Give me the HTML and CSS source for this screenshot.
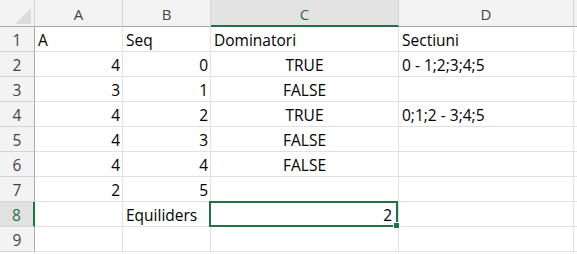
FILE: index.html
```html
<!DOCTYPE html>
<html lang="ro">
<head>
    <meta charset="UTF-8">
    <meta name="viewport" content="width=device-width, initial-scale=1.0">
    <title>Equiliders</title>
    <link rel="stylesheet" href="styles.css">
</head>
<body>
    <div class="sheet">
        <!-- column headers -->
        <div class="corner">
            <svg class="corner-tri" width="16" height="16" viewBox="0 0 16 16"><polygon points="16,0 16,16 0,16" fill="#dcdcdc"/></svg>
        </div>
        <div class="colhead">A</div>
        <div class="colhead">B</div>
        <div class="colhead active">C</div>
        <div class="colhead">D</div>
        <div class="colhead last"></div>

        <div class="rowhead">1</div>
        <div class="cell">A</div>
        <div class="cell">Seq</div>
        <div class="cell">Dominatori</div>
        <div class="cell">Sectiuni</div>
        <div class="cell"></div>

        <div class="rowhead">2</div>
        <div class="cell num">4</div>
        <div class="cell num">0</div>
        <div class="cell bool">TRUE</div>
        <div class="cell">0 - 1;2;3;4;5</div>
        <div class="cell"></div>

        <div class="rowhead">3</div>
        <div class="cell num">3</div>
        <div class="cell num">1</div>
        <div class="cell bool">FALSE</div>
        <div class="cell"></div>
        <div class="cell"></div>

        <div class="rowhead">4</div>
        <div class="cell num">4</div>
        <div class="cell num">2</div>
        <div class="cell bool">TRUE</div>
        <div class="cell">0;1;2 - 3;4;5</div>
        <div class="cell"></div>

        <div class="rowhead">5</div>
        <div class="cell num">4</div>
        <div class="cell num">3</div>
        <div class="cell bool">FALSE</div>
        <div class="cell"></div>
        <div class="cell"></div>

        <div class="rowhead">6</div>
        <div class="cell num">4</div>
        <div class="cell num">4</div>
        <div class="cell bool">FALSE</div>
        <div class="cell"></div>
        <div class="cell"></div>

        <div class="rowhead">7</div>
        <div class="cell num">2</div>
        <div class="cell num">5</div>
        <div class="cell"></div>
        <div class="cell"></div>
        <div class="cell"></div>

        <div class="rowhead active">8</div>
        <div class="cell"></div>
        <div class="cell">Equiliders</div>
        <div class="cell num selected">2
            <span class="sel-box"><span class="sel-handle"></span></span>
        </div>
        <div class="cell"></div>
        <div class="cell"></div>

        <div class="rowhead">9</div>
        <div class="cell"></div>
        <div class="cell"></div>
        <div class="cell"></div>
        <div class="cell"></div>
        <div class="cell"></div>
    </div>
</body>
</html>
```
FILE: styles.css
```css
body { margin: 0; background: #fff; overflow: hidden; font-family: "Open Sans", "Noto Sans", sans-serif; }

.sheet {
    display: grid;
    grid-template-columns: 35px 88px 88px 188px 175px 1fr;
    grid-template-rows: 27px repeat(9, 25px);
    width: 577px;
    height: 254px;
    font-size: 15.5px;
    color: #000;
}

.corner, .colhead, .rowhead, .cell { box-sizing: border-box; }

/* header strip */
.corner {
    position: relative;
    background: #f3f3f3;
    border-right: 1px solid #d4d4d4;
    border-bottom: 1px solid #a8a8a8;
}
.corner-tri { position: absolute; right: 3px; bottom: 2px; }

.colhead {
    background: #f3f3f3;
    border-right: 1px solid #d4d4d4;
    border-bottom: 1px solid #a8a8a8;
    text-align: center;
    color: #444;
    font-size: 15px;
    line-height: 22px;
    padding-top: 3px;
}
.colhead.active {
    background: #e3e3e3;
    color: #217346;
    border-bottom: 2px solid #217346;
}
.colhead.last { border-right: none; }

.rowhead {
    background: #f3f3f3;
    border-right: 1px solid #a8a8a8;
    border-bottom: 1px solid #d4d4d4;
    text-align: center;
    color: #444;
    line-height: 22px;
    padding-top: 2px;
}
.rowhead.active {
    background: #e1e1e1;
    color: #217346;
    border-right: 2px solid #217346;
}

/* cells */
.cell {
    border-right: 1px solid #e1e1e1;
    border-bottom: 1px solid #e1e1e1;
    line-height: 22px;
    padding: 2px 3px 0 3px;
    white-space: nowrap;
    overflow: visible;
}
.cell.num { text-align: right; padding-right: 2px; }
.cell.bool { text-align: center; }

.cell.selected { position: relative; padding-right: 6px; }
.sel-box {
    position: absolute;
    left: -2px;
    top: -1px;
    right: 0;
    bottom: -1px;
    border: 2px solid #217346;
}
.sel-handle {
    position: absolute;
    right: -4px;
    bottom: -4px;
    width: 5px;
    height: 5px;
    background: #217346;
    border: 1px solid #fff;
}
```
